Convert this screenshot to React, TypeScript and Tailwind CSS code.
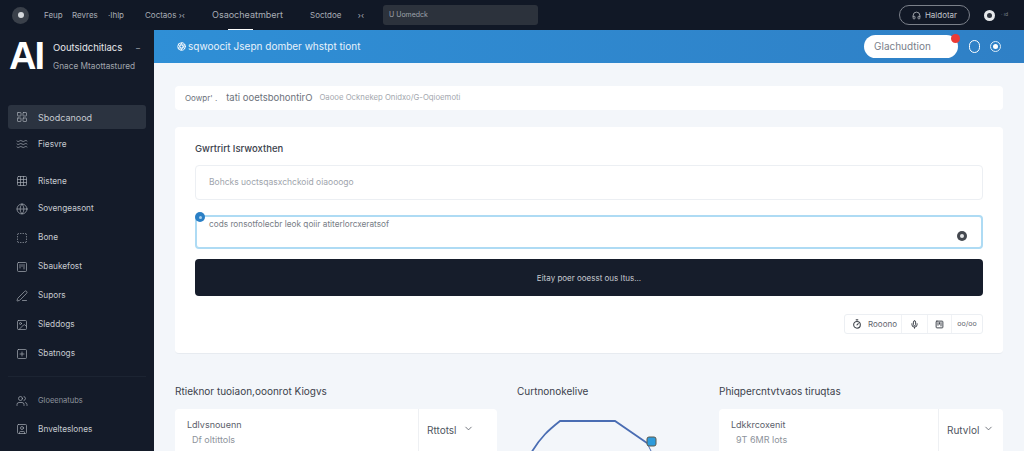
import { LayoutGrid, Waves, Grid3x3, Globe, SquareDashed, SquareKanban, PenLine, Image, SquarePlus, Users, SquareUser, Mic, ChevronDown, Headphones, Timer, Aperture } from "lucide-react";
import type { ComponentType } from "react";

type Icon = ComponentType<{ size?: number; strokeWidth?: number; className?: string }>;

function NavRow({ icon: I, label, cls, active, muted }: { icon: Icon; label: string; cls: string; active?: boolean; muted?: boolean }) {
  return (
    <div className={`flex items-center rounded-[3px] pl-[8px] ${cls} ${active ? "bg-[#2b3340]" : ""}`}>
      <I size={12} strokeWidth={1.4} className="text-[#a7adb6] shrink-0" />
      <span className={`ml-[10px] leading-none ${muted ? "text-[7.5px] text-[#8d939d]" : active ? "text-[9px] text-[#c6cad0]" : "text-[8.25px] text-[#c6cad0]"}`}>{label}</span>
    </div>
  );
}

function SelectCard({ title, sub, value, widthCls, chevCls }: { title: string; sub: string; value: string; widthCls: string; chevCls: string }) {
  return (
    <div className="mt-[11px] flex h-[60px] rounded-t-[4px] bg-white">
      <div className="flex-1 pl-[12px] pt-[11px] text-[9px] leading-none">
        <div className="text-[#5b616b]">{title}</div>
        <div className="mt-[6px] pl-[5px] text-[#8d939b]">{sub}</div>
      </div>
      <div className={`flex items-start border-l border-[#eef0f3] pl-[8px] pt-[16px] text-[10px] leading-none text-[#50565f] ${widthCls}`}>
        <span className="flex-1">{value}</span>
        <ChevronDown size={11} strokeWidth={1.6} className={`mt-[-2px] text-[#444a53] ${chevCls}`} />
      </div>
    </div>
  );
}

export default function App() {
  return (
    <div className="flex h-[451px] w-[1024px] flex-col overflow-hidden bg-[#f3f6fa] font-['Inter','Liberation_Sans',sans-serif]">
      <header className="flex h-[30px] shrink-0 items-center whitespace-nowrap bg-[#111826] text-[8px] text-[#a9aeb6]">
        <div className="ml-[12px] flex h-[17px] w-[17px] items-center justify-center rounded-full bg-[#3a404a]">
          <span className="h-[6px] w-[6px] rounded-full bg-[#d5d8dc]" />
        </div>
        <span className="ml-[15px] w-[20px]">Feup</span>
        <span className="ml-[8px] w-[26px]">Revres</span>
        <span className="ml-[10px] w-[20px]">·Ihlp</span>
        <span className="ml-[17px] w-[46px]">Coctaos ›‹</span>
        <div className="relative ml-[21px] flex h-[30px] items-center text-[9px]">
          <span>Osaocheatmbert</span>
          <span className="absolute bottom-0 left-[16px] h-[1px] w-[25px] bg-white" />
        </div>
        <div className="ml-[27px] flex w-[54px] justify-between"><span>Soctdoe</span><span>›‹</span></div>
        <div className="ml-[19px] flex h-[20px] w-[155px] items-center rounded-[3px] bg-[#2c323c] pl-[6px] text-[7px] text-[#9ea3ab]">U Uomedck</div>
        <div className="ml-[361px] flex h-[20px] w-[71px] items-center justify-center rounded-full border border-[#7b808a] text-[#c0c4ca]">
          <Headphones size={9} className="mr-[4px]" />Haldotar
        </div>
        <div className="ml-[14px] flex h-[11px] w-[11px] items-center justify-center rounded-full bg-[#e7e9ec]">
          <span className="h-[5px] w-[5px] rounded-full bg-[#2d333d]" />
        </div>
        <span className="ml-[6px] text-[5px] text-[#7b808a]">· ıd</span>
      </header>
      <div className="flex min-h-0 flex-1">
        <aside className="w-[154px] shrink-0 bg-[#141b29]">
          <div className="flex h-[75px] pl-[9px] pt-[6px]">
            <span className="font-['Liberation_Sans',sans-serif] text-[38px] font-bold leading-[40px] tracking-[-2px] text-white">AI</span>
            <div className="ml-[10px] pt-[7px]">
              <div className="flex w-[87px] items-center justify-between text-[9.5px] leading-none text-[#e6e8eb]"><span>Ooutsidchitlacs</span><span className="text-[8px] text-[#a9aeb6]">–</span></div>
              <div className="mt-[9px] whitespace-nowrap text-[8.25px] leading-none text-[#a0a5ad]">Gnace Mtaottastured</div>
            </div>
          </div>
          <div className="px-[8px]">
            <NavRow icon={LayoutGrid} label="Sbodcanood" cls="h-[24px]" active />
            <NavRow icon={Waves} label="Fiesvre" cls="mt-[2px] h-[26px]" />
            <NavRow icon={Grid3x3} label="Ristene" cls="mt-[11px] h-[26px]" />
            <NavRow icon={Globe} label="Sovengeasont" cls="mt-[1px] h-[27px]" />
            <NavRow icon={SquareDashed} label="Bone" cls="mt-[1px] h-[29px]" />
            <NavRow icon={SquareKanban} label="Sbaukefost" cls="h-[29px]" />
            <NavRow icon={PenLine} label="Supors" cls="h-[29px]" />
            <NavRow icon={Image} label="Sleddogs" cls="h-[29px]" />
            <NavRow icon={SquarePlus} label="Sbatnogs" cls="h-[29px]" />
            <div className="mt-[8px] h-px bg-[#1c2432]" />
            <NavRow icon={Users} label="Gloeenatubs" cls="mt-[10px] h-[28px]" muted />
            <NavRow icon={SquareUser} label="Bnvelteslones" cls="h-[28px]" />
          </div>
        </aside>
        <main className="min-w-0 flex-1">
          <div className="flex h-[33px] items-center bg-gradient-to-r from-[#2f8fd6] to-[#2f80c6] pl-[23px] pr-[23px]">
            <Aperture size={9} strokeWidth={2.4} className="text-white" />
            <span className="ml-[2px] text-[10px] text-[#e8f2fb]">sqwoocit Jsepn domber whstpt tiont</span>
            <div className="relative ml-auto flex h-[23px] w-[94px] items-center rounded-full bg-white pl-[10px] text-[10px] text-[#7a808a]">
              Glachudtion
              <span className="absolute right-[-2px] top-[-1px] h-[9px] w-[9px] rounded-full bg-[#ec3a35]" />
            </div>
            <span className="ml-[11px] h-[13px] w-[11px] rounded-full border border-white" />
            <span className="ml-[10px] flex h-[11px] w-[11px] items-center justify-center rounded-full border border-[#dcebf7]"><span className="h-[5px] w-[5px] rounded-full bg-white" /></span>
          </div>
          <div className="px-[21px] pt-[23px]">
            <div className="flex h-[24px] items-center rounded-[4px] bg-white pl-[10px] text-[8px] text-[#6c727b]">
              Oowpr' .<span className="ml-[9px] text-[9.5px]">tati ooetsbohontirO</span><span className="ml-[7px] text-[7.75px] text-[#a3a7ae]">Oaooe Ocknekep Onidxo/G-Oqioemoti</span>
            </div>
            <section className="mt-[17px] h-[227px] rounded-[4px] border-b border-[#e7ebf0] bg-white px-[20px] pt-[15px]">
              <div className="text-[9.5px] font-medium leading-[14px] text-[#3c424c]">Gwrtrirt Isrwoxthen</div>
              <div className="mt-[9px] flex h-[35px] items-center rounded-[4px] border border-[#eceff3] pl-[13px] text-[8.5px] text-[#a0a5ad]">Bohcks uoctsqasxchckoid oiaooogo</div>
              <div className="relative mt-[15px] h-[34px] rounded-[4px] border-2 border-[#aedbf4] pl-[12px] pt-[1px] text-[8.25px] leading-[12px] text-[#777d86]">
                cods ronsotfolecbr leok qoiir atiterlorcxeratsof
                <span className="absolute left-[-2px] top-[-5px] flex h-[10px] w-[10px] items-center justify-center rounded-full bg-[#2a7fc5]"><span className="h-[3px] w-[3px] rounded-full bg-[#a9d0ee]" /></span>
                <span className="absolute bottom-[6px] right-[14px] flex h-[10px] w-[10px] items-center justify-center rounded-full bg-[#44484f]"><span className="h-[4px] w-[4px] rounded-full bg-[#e4e6e8]" /></span>
              </div>
              <div className="mt-[10px] flex h-[37px] items-center justify-center rounded-[4px] bg-[#161d2b] text-[8px] text-[#c6cad0]">Eitay poer ooesst ous ltus...</div>
              <div className="mt-[18px] flex justify-end">
                <div className="flex h-[20px] items-center rounded-[3px] border border-[#eceff3] text-[8px] text-[#5f656e]">
                  <div className="flex h-full w-[57px] items-center border-r border-[#f0f2f5] pl-[7px]"><Timer size={10} strokeWidth={2.6} className="mr-[6px] text-[#3e434b]" />Rooono</div>
                  <div className="flex h-full w-[26px] items-center justify-center border-r border-[#f0f2f5]"><Mic size={9} strokeWidth={2.6} className="text-[#3e434b]" /></div>
                  <div className="flex h-full w-[24px] items-center justify-center border-r border-[#f0f2f5]"><SquareKanban size={9} strokeWidth={2.6} className="text-[#3e434b]" /></div>
                  <div className="flex h-full w-[30px] items-center justify-center text-[7px]">oo/oo</div>
                </div>
              </div>
            </section>
            <div className="mt-[30px] flex">
              <div className="w-[322px]">
                <div className="text-[10px] leading-[14px] text-[#3c424c]">Rtieknor tuoiaon,ooonrot Kiogvs</div>
                <SelectCard title="Ldlvsnouenn" sub="Df oltittols" value="Rttotsl" widthCls="w-[79px]" chevCls="mr-[23px]" />
              </div>
              <div className="ml-[20px] w-[202px]">
                <div className="text-[10px] leading-[14px] text-[#3c424c]">Curtnonokelive</div>
                <div className="relative mt-[11px] h-[60px] w-[180px]">
                  <svg width="180" height="60" viewBox="0 0 180 60" className="absolute left-0 top-0 overflow-visible">
                    <path d="M13 46 C23 28 33 20 43 12 L98 12 L130 34" fill="none" stroke="#4a6db3" strokeWidth="1.8" />
                    <path d="M130 34 L136 46" fill="none" stroke="#4a6db3" strokeWidth="1" />
                    <rect x="130" y="28" width="9" height="9" rx="2" fill="#2e9bdb" stroke="#5c5a4c" strokeWidth="1" />
                  </svg>
                </div>
              </div>
              <div className="w-[284px]">
                <div className="text-[10px] leading-[14px] text-[#3c424c]">Phiqpercntvtvaos tiruqtas</div>
                <SelectCard title="Ldkkrcoxenit" sub="9T 6MR lots" value="Rutvlol" widthCls="w-[65px]" chevCls="mr-[9px]" />
              </div>
            </div>
          </div>
        </main>
      </div>
    </div>
  );
}
